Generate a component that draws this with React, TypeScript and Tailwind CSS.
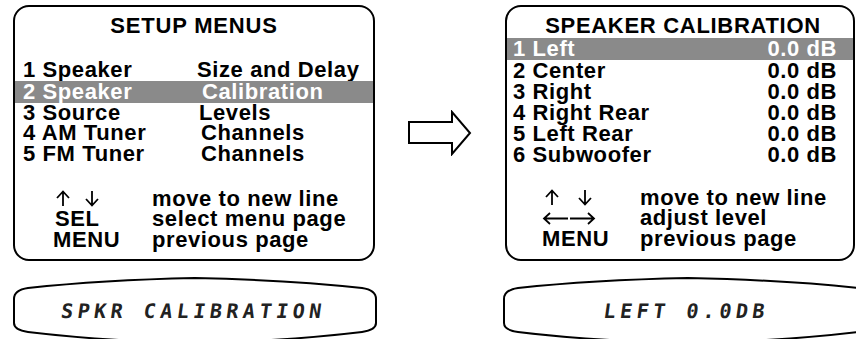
const menuRows = [
  { num: "1 Speaker", item: "Size and Delay", shift: "ml-0", on: false },
  { num: "2 Speaker", item: "Calibration", shift: "ml-[5px]", on: true },
  { num: "3 Source", item: "Levels", shift: "ml-[2px]", on: false },
  { num: "4 AM Tuner", item: "Channels", shift: "ml-[4px]", on: false },
  { num: "5 FM Tuner", item: "Channels", shift: "ml-[4px]", on: false },
];

const calRows = ["1 Left", "2 Center", "3 Right", "4 Right Rear", "5 Left Rear", "6 Subwoofer"];

function UpDown({ up, down }: { up: number; down: number }) {
  return (
    <svg width="50" height="17" viewBox="0 0 50 17" fill="none" stroke="black" strokeWidth="1.8">
      <path d={`M ${up} 1.5 L ${up} 16 M ${up - 6} 8 L ${up} 1.5 L ${up + 6} 8`} />
      <path d={`M ${down} 1 L ${down} 15.5 M ${down - 6} 9 L ${down} 15.5 L ${down + 6} 9`} />
    </svg>
  );
}

function LeftRight() {
  return (
    <svg width="54" height="13" viewBox="0 0 54 13" fill="none" stroke="black" strokeWidth="1.8">
      <path d="M 2 6.5 L 26 6.5 M 8 1 L 2 6.5 L 8 12" />
      <path d="M 28 6.5 L 52 6.5 M 46 1 L 52 6.5 L 46 12" />
    </svg>
  );
}

function Lcd({ text, width }: { text: string; width: number }) {
  const w = width;
  const d = `M 2 22 Q 2 13 16 11 Q 90 3 ${w / 2} 1 Q ${w - 90} 3 ${w - 16} 11 Q ${w - 2} 13 ${w - 2} 22 L ${w - 2} 46 Q ${w - 2} 53 ${w - 16} 55 Q ${w - 90} 64 ${w / 2} 66 Q 90 64 16 55 Q 2 53 2 46 Z`;
  return (
    <div className="relative h-[70px] shrink-0" style={{ width: w }}>
      <svg className="absolute inset-0" width={w} height={70} viewBox={`0 0 ${w} 70`}>
        <path d={d} fill="none" stroke="black" strokeWidth="2" />
      </svg>
      <div className="relative pt-[22px] text-center font-['DejaVu_Sans_Mono',monospace] text-[20px] leading-[24px] tracking-[4.5px] text-[#222] [transform:skewX(-8deg)]">
        {text}
      </div>
    </div>
  );
}

export default function App() {
  return (
    <div className="w-[856px] h-[339px] overflow-hidden bg-white text-black font-['Liberation_Sans',Arial,sans-serif] font-bold text-[22px] tracking-[0.6px]">
      <div className="flex items-center pt-[5px]">
        {/* setup menus */}
        <div className="ml-[13px] w-[362px] h-[256px] shrink-0 rounded-[16px] border-2 border-black pt-[8.5px] flex flex-col">
          <div className="text-center leading-[20.5px] tracking-[0.8px]">SETUP MENUS</div>
          <div className="mt-[24px] flex flex-col">
            {menuRows.map((r) => (
              <div
                key={r.num}
                className={
                  r.on
                    ? "flex pl-[8px] h-[22px] leading-[22px] bg-[#8a8a8a] text-white"
                    : "flex pl-[8px] h-[20.5px] leading-[20.5px]"
                }
              >
                <span className="w-[174px] shrink-0 whitespace-nowrap">{r.num}</span>
                <span className={`whitespace-nowrap ${r.shift}`}>{r.item}</span>
              </div>
            ))}
          </div>
          <div className="mt-[24.5px] pl-[40px] grid grid-cols-[97px_1fr] leading-[20.5px]">
            <span className="h-[20.5px] flex items-center">
              <UpDown up={8} down={37} />
            </span>
            <span className="whitespace-nowrap">move to new line</span>
            <span>SEL</span>
            <span className="whitespace-nowrap">select menu page</span>
            <span className="-ml-[2px]">MENU</span>
            <span className="whitespace-nowrap">previous page</span>
          </div>
        </div>

        {/* arrow */}
        <div className="w-[130px] shrink-0 flex justify-center">
          <svg width="66" height="46" viewBox="0 0 66 46">
            <polygon
              points="2,12 45,12 45,2 63,23 45,44 45,33 2,33"
              fill="white"
              stroke="black"
              strokeWidth="2"
              strokeLinejoin="miter"
            />
          </svg>
        </div>

        {/* speaker calibration */}
        <div className="w-[350px] h-[256px] shrink-0 rounded-[16px] border-2 border-black pt-[8.5px] flex flex-col">
          <div className="text-center leading-[20.5px] tracking-[0.7px] pl-[6px] whitespace-nowrap">SPEAKER CALIBRATION</div>
          <div className="mt-[2px] flex flex-col">
            {calRows.map((name, i) => (
              <div
                key={name}
                className={
                  i === 0
                    ? "flex justify-between pl-[6px] pr-[16px] h-[22px] leading-[22px] bg-[#8a8a8a] text-white"
                    : "flex justify-between pl-[6px] pr-[16px] h-[21px] leading-[21px]"
                }
              >
                <span className="whitespace-nowrap">{name}</span>
                <span className="whitespace-nowrap">0.0 dB</span>
              </div>
            ))}
          </div>
          <div className="mt-[22.5px] pl-[38px] grid grid-cols-[95px_1fr] leading-[20.5px]">
            <span className="h-[20.5px] flex items-center">
              <UpDown up={7} down={40} />
            </span>
            <span className="whitespace-nowrap">move to new line</span>
            <span className="h-[20.5px] flex items-center -ml-[3px]">
              <LeftRight />
            </span>
            <span className="whitespace-nowrap">adjust level</span>
            <span className="-ml-[3px]">MENU</span>
            <span className="whitespace-nowrap">previous page</span>
          </div>
        </div>
      </div>

      {/* front panel displays */}
      <div className="flex mt-[16px]">
        <div className="ml-[12px]">
          <Lcd text="SPKR CALIBRATION" width={366} />
        </div>
        <div className="ml-[124px]">
          <Lcd text="LEFT 0.0DB" width={372} />
        </div>
      </div>
    </div>
  );
}
